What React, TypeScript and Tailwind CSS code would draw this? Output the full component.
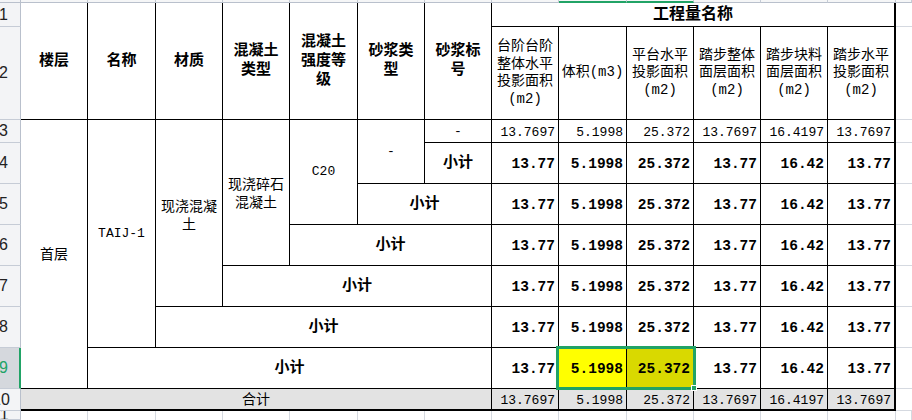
import React from "react";

const colStart = [
  "col-start-9",
  "col-start-10",
  "col-start-11",
  "col-start-12",
  "col-start-13",
  "col-start-14",
];
const bodyRowStart = [
  "row-start-4",
  "row-start-5",
  "row-start-6",
  "row-start-7",
  "row-start-8",
  "row-start-9",
  "row-start-10",
  "row-start-11",
];
const allColStart = [
  "col-start-2",
  "col-start-3",
  "col-start-4",
  "col-start-5",
  "col-start-6",
  "col-start-7",
  "col-start-8",
  "col-start-9",
  "col-start-10",
  "col-start-11",
  "col-start-12",
  "col-start-13",
  "col-start-14",
  "col-start-15",
];
const headerRowStart = [
  "row-start-2",
  "row-start-3",
  "row-start-4",
  "row-start-5",
  "row-start-6",
  "row-start-7",
  "row-start-8",
  "row-start-9",
  "row-start-10",
  "row-start-11",
  "row-start-12",
];

const normalVals = ["13.7697", "5.1998", "25.372", "13.7697", "16.4197", "13.7697"];
const boldVals = ["13.77", "5.1998", "25.372", "13.77", "16.42", "13.77"];

const B = "border-r border-b border-black flex items-center justify-center text-center bg-white";

export default function App() {
  const numberCells: React.ReactNode[] = [];
  for (let r = 0; r < 8; r++) {
    const isBold = r >= 1 && r <= 6;
    const isTotal = r === 7;
    const vals = isBold ? boldVals : normalVals;
    for (let c = 0; c < 6; c++) {
      let bg = "bg-white";
      if (isTotal) bg = "bg-[#e3e3e3]";
      if (r === 6 && c === 1) bg = "bg-[#ffff00]";
      if (r === 6 && c === 2) bg = "bg-[#d9d900]";
      numberCells.push(
        <div
          key={`n${r}-${c}`}
          className={`${colStart[c]} ${bodyRowStart[r]} ${bg} border-black ${
            c === 5 ? "border-r-2" : "border-r"
          } ${isTotal ? "border-b-2" : "border-b"} flex items-center justify-end pr-[3px] pt-[3px] ${
            isBold ? "font-bold text-[14.5px]" : "text-[13px]"
          } text-black whitespace-nowrap`}
        >
          {vals[c]}
        </div>
      );
    }
  }

  const rowLabels = ["1", "2", "3", "4", "5", "6", "7", "8", "9", "10", "11"];

  return (
    <div className="w-[912px] h-[420px] overflow-hidden bg-white font-['Liberation_Mono','Noto_Sans_CJK_SC',monospace] text-black">
      <div className="relative grid grid-cols-[21px_67px_68px_67px_67px_68px_67px_67px_67px_68px_67px_67px_67px_68px_16px] grid-rows-[3px_24px_93px_23px_41px_41px_41px_41px_41px_41px_22px_9px]">
        {/* top strip (column headers bottom) */}
        <div className="col-start-1 row-start-1 bg-[#f3f4f6] border-r border-b border-[#b9c0cc]" />
        {allColStart.map((cs, i) => (
          <div
            key={`t${i}`}
            className={`${cs} row-start-1 bg-[#f5f6f7] border-r border-[#c6ccd6] ${
              i === 8 || i === 9 ? "border-b-2 border-b-[#21a366]" : "border-b border-b-[#b9c0cc]"
            }`}
          />
        ))}

        {/* row headers */}
        {rowLabels.map((lab, i) => {
          const sel = i === 8;
          return (
            <div
              key={`rh${i}`}
              className={`col-start-1 ${headerRowStart[i]} overflow-hidden flex items-center font-['Liberation_Sans',sans-serif] text-[16px] border-b border-b-[#c6ccd6] ${
                sel
                  ? "bg-[#d5d8dd] text-[#21a366] border-r-2 border-r-[#21a366]"
                  : "bg-[#f3f4f6] text-[#222] border-r border-r-[#b9c0cc]"
              }`}
            >
              <span className={`whitespace-nowrap ${lab.length > 1 ? "-ml-[8px]" : "-ml-[1px]"}`}>{lab}</span>
            </div>
          );
        })}

        {/* header block */}
        <div className={`col-start-2 row-start-2 row-span-2 ${B} font-bold text-[15px] leading-[19px]`}>楼层</div>
        <div className={`col-start-3 row-start-2 row-span-2 ${B} font-bold text-[15px] leading-[19px]`}>名称</div>
        <div className={`col-start-4 row-start-2 row-span-2 ${B} font-bold text-[15px] leading-[19px]`}>材质</div>
        <div className={`col-start-5 row-start-2 row-span-2 ${B} font-bold text-[15px] leading-[19px]`}>
          混凝土
          <br />
          类型
        </div>
        <div className={`col-start-6 row-start-2 row-span-2 ${B} font-bold text-[15px] leading-[19px]`}>
          混凝土
          <br />
          强度等
          <br />
          级
        </div>
        <div className={`col-start-7 row-start-2 row-span-2 ${B} font-bold text-[15px] leading-[19px]`}>
          砂浆类
          <br />
          型
        </div>
        <div className={`col-start-8 row-start-2 row-span-2 ${B} font-bold text-[15px] leading-[19px]`}>
          砂浆标
          <br />
          号
        </div>
        <div className="col-start-9 col-span-6 row-start-2 border-r-2 border-b border-black flex items-center justify-center font-bold text-[16px] tracking-[0px] bg-white">
          工程量名称
        </div>
        <div className={`col-start-9 row-start-3 ${B} text-[14px] leading-[17.5px]`}>
          台阶台阶
          <br />
          整体水平
          <br />
          投影面积
          <br />
          (m2)
        </div>
        <div className={`col-start-10 row-start-3 ${B} text-[14px] leading-[17.5px] whitespace-nowrap`}>体积(m3)</div>
        <div className={`col-start-11 row-start-3 ${B} text-[14px] leading-[17.5px]`}>
          平台水平
          <br />
          投影面积
          <br />
          (m2)
        </div>
        <div className={`col-start-12 row-start-3 ${B} text-[14px] leading-[17.5px]`}>
          踏步整体
          <br />
          面层面积
          <br />
          (m2)
        </div>
        <div className={`col-start-13 row-start-3 ${B} text-[14px] leading-[17.5px]`}>
          踏步块料
          <br />
          面层面积
          <br />
          (m2)
        </div>
        <div className="col-start-14 row-start-3 border-r-2 border-b border-black flex items-center justify-center text-center bg-white text-[14px] leading-[17.5px]">
          踏步水平
          <br />
          投影面积
          <br />
          (m2)
        </div>

        {/* body merged cells */}
        <div className={`col-start-2 row-start-4 row-span-7 ${B} text-[14px] pt-[3px]`}>首层</div>
        <div className={`col-start-3 row-start-4 row-span-6 ${B} text-[13px]`}>TAIJ-1</div>
        <div className={`col-start-4 row-start-4 row-span-5 ${B} text-[14px] leading-[18px] pt-[6px]`}>
          现浇混凝
          <br />土
        </div>
        <div className={`col-start-5 row-start-4 row-span-4 ${B} text-[14px] leading-[18px] pt-[3px]`}>
          现浇碎石
          <br />
          混凝土
        </div>
        <div className={`col-start-6 row-start-4 row-span-3 ${B} text-[13px]`}>C20</div>
        <div className={`col-start-7 row-start-4 row-span-2 ${B} text-[13px]`}>-</div>
        <div className={`col-start-8 row-start-4 ${B} text-[13px] pt-[2px]`}>-</div>
        <div className={`col-start-8 row-start-5 ${B} font-bold text-[15px] pt-[3px]`}>小计</div>
        <div className={`col-start-7 col-span-2 row-start-6 ${B} font-bold text-[15px] pt-[3px]`}>小计</div>
        <div className={`col-start-6 col-span-3 row-start-7 ${B} font-bold text-[15px] pt-[3px]`}>小计</div>
        <div className={`col-start-5 col-span-4 row-start-8 ${B} font-bold text-[15px] pt-[3px]`}>小计</div>
        <div className={`col-start-4 col-span-5 row-start-9 ${B} font-bold text-[15px] pt-[3px]`}>小计</div>
        <div className={`col-start-3 col-span-6 row-start-10 ${B} font-bold text-[15px] pt-[3px]`}>小计</div>
        <div className="col-start-2 col-span-7 row-start-11 border-r border-b-2 border-black flex items-center justify-center bg-[#e3e3e3] text-[14px] pt-[2px]">
          合计
        </div>

        {numberCells}

        {/* column N gridlines */}
        {headerRowStart.slice(0, 10).map((rs, i) => (
          <div key={`nc${i}`} className={`col-start-15 ${rs} border-b border-[#d5d9e0] bg-white`} />
        ))}
        {/* row 11 gridlines */}
        {allColStart.map((cs, i) => (
          <div key={`r11${i}`} className={`${cs} row-start-12 border-r border-[#d5d9e0] bg-white`} />
        ))}

        {/* selection overlay */}
        <div className="absolute left-[556px] top-[346px] w-[140px] h-[44px] border-[3px] border-[#21a366] pointer-events-none" />
        <div className="absolute left-[691px] top-[385px] w-[6px] h-[6px] bg-[#21a366] border border-white pointer-events-none" />
      </div>
    </div>
  );
}
